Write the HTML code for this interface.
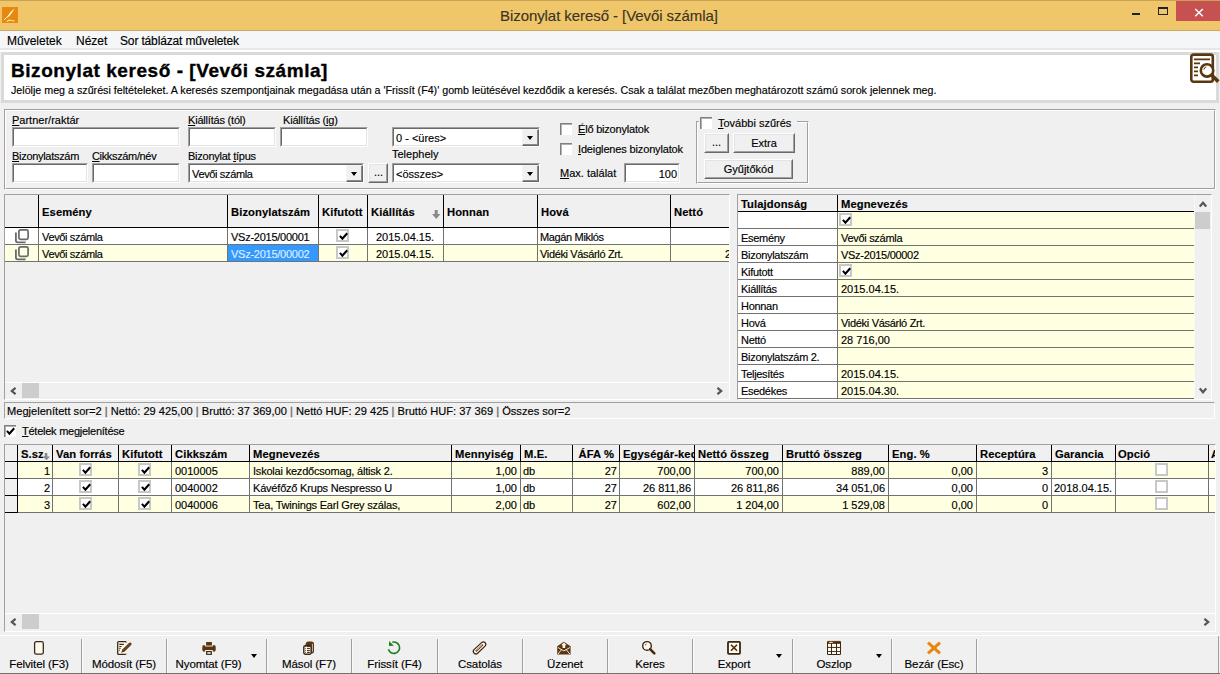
<!DOCTYPE html>
<html><head><meta charset="utf-8">
<style>
*{box-sizing:border-box;margin:0;padding:0}
html,body{width:1220px;height:674px;overflow:hidden}
body{position:relative;background:#F0F0F0;font-family:"Liberation Sans",sans-serif;font-size:11px;color:#000;letter-spacing:0}
.n{letter-spacing:0}
.a{position:absolute}
.t{position:absolute;white-space:nowrap;line-height:1;-webkit-text-stroke:0.15px currentColor}
/* title bar */
#tb{left:0;top:0;width:1220px;height:31px;background:#F0C66B;border-top:1px solid #C9A255;border-bottom:1px solid #CCA862}
#mb{left:0;top:31px;width:1220px;height:18px;background:#F5F6F7;border-bottom:1px solid #E6E7E8}
.tx{box-sizing:border-box;background:#fff;border-top:2px solid #8a8a8a;border-left:2px solid #8a8a8a;border-bottom:1px solid #fff;border-right:1px solid #fff;box-shadow:1px 1px 0 #E3E3E3 inset}
.sunk{position:absolute;background:#fff;border-top:1px solid #A0A0A0;border-left:1px solid #A0A0A0;border-right:1px solid #fff;border-bottom:1px solid #fff}
.sunk::before{content:"";position:absolute;left:0;top:0;right:0;bottom:0;border-top:1px solid #696969;border-left:1px solid #696969;border-right:1px solid #E3E3E3;border-bottom:1px solid #E3E3E3}
.btn{position:absolute;background:#F0F0F0;border-top:1px solid #fff;border-left:1px solid #fff;border-right:1px solid #696969;border-bottom:1px solid #696969;text-align:center}
.btn::before{content:"";position:absolute;left:0;top:0;right:0;bottom:0;border-top:1px solid #E3E3E3;border-left:1px solid #E3E3E3;border-right:1px solid #A0A0A0;border-bottom:1px solid #A0A0A0}
.dd{position:absolute;top:1px;right:0;width:17px;height:17px;background:#F0F0F0;border-top:1px solid #F4F4F4;border-left:1px solid #F4F4F4;border-right:1px solid #696969;border-bottom:1px solid #696969;box-shadow:inset -1px -1px 0 #8A8A8A}
.dd::after{content:"";position:absolute;left:4px;top:6px;border-left:3.5px solid transparent;border-right:3.5px solid transparent;border-top:4px solid #000}
.cb{position:absolute;width:12px;height:12px;background:#fff;border-top:1px solid #808080;border-left:1px solid #808080;box-shadow:inset 1px 1px 0 #B0B0B0}
.gcb{position:absolute;width:13px;height:13px;background:#fff;border:2px solid #C8C8C8}
.chk{position:absolute;left:1px;top:1px;width:9px;height:9px}
</style></head><body>

<!-- TITLE BAR -->
<div id="tb" class="a">
  <svg class="a" style="left:2px;top:6px" width="16" height="16" viewBox="0 0 16 16"><rect width="16" height="16" fill="#E8890F"/><path d="M2.5 12.5 L6 8.5 Q9 4 12.5 1.5 Q11 5 7.5 9 Z" fill="#FFF6D0"/><path d="M2 13 L4 11" stroke="#FFF6D0" stroke-width="1"/><path d="M5 14.5 Q7 12.5 9 13.5 L12.5 14" stroke="#FFE9B0" stroke-width="1.1" fill="none"/></svg>
  <div class="t" style="left:500px;top:7px;font-size:15px;color:#3B3423;letter-spacing:-0.07px">Bizonylat kereső - [Vevői számla]</div>
  <div class="a" style="left:1132px;top:12px;width:8px;height:2px;background:#222"></div>
  <div class="a" style="left:1158px;top:6px;width:10px;height:8px;border:1px solid #222;border-top-width:2px"></div>
  <div class="a" style="left:1176px;top:0;width:44px;height:20px;background:#C75050"></div>
  <svg class="a" style="left:1194px;top:7px" width="10" height="9" viewBox="0 0 10 9"><path d="M1.2 1 L8.8 8.2 M8.8 1 L1.2 8.2" stroke="#fff" stroke-width="1.5"/></svg>
</div>

<!-- MENU BAR -->
<div id="mb" class="a">
  <div class="t" style="left:7px;top:4px;font-size:12px">Műveletek</div>
  <div class="t" style="left:76px;top:4px;font-size:12px">Nézet</div>
  <div class="t" style="left:120px;top:4px;font-size:12px;letter-spacing:-0.15px">Sor táblázat műveletek</div>
</div>

<!-- HEADER PANEL -->
<div class="a" style="left:0;top:49px;width:1220px;height:3px;background:#fff;border-top:1px solid #E6E7E8"></div>
<div class="a" style="left:1px;top:52px;width:1218px;height:51px;background:#fff;border:3px solid #DADADA;border-top-width:3px;border-right-width:3px"></div>
<div class="t" style="left:11px;top:61px;font-size:19px;font-weight:bold;letter-spacing:0.55px;-webkit-text-stroke:0.35px #000">Bizonylat kereső - [Vevői számla]</div>
<div class="t" style="left:11px;top:85px;font-size:10.7px">Jelölje meg a szűrési feltételeket. A keresés szempontjainak megadása után a 'Frissít (F4)' gomb leütésével kezdődik a keresés. Csak a találat mezőben meghatározott számú sorok jelennek meg.</div>
<svg class="a" style="left:1189px;top:53px" width="31" height="31" viewBox="0 0 31 31">
  <rect x="2.3" y="1.6" width="21.5" height="27.2" rx="2.2" fill="#fff" stroke="#5A3710" stroke-width="2.6"/>
  <path d="M5 6.4 H21 M5 10.4 H11 M5 14.4 H9 M5 18.4 H9 M5 22.4 H9" stroke="#5A3710" stroke-width="1.7"/>
  <circle cx="18" cy="17.4" r="6.2" fill="#fff" stroke="#5A3710" stroke-width="2.6"/>
  <path d="M22.5 22 L29.3 28.6" stroke="#5A3710" stroke-width="3.6"/>
  <path d="M14.8 16.5 Q15.3 14.3 17.3 13.8" stroke="#5A3710" stroke-width="1" fill="none"/>
</svg>


<!-- FILTER PANEL -->
<div class="a" style="left:4px;top:109px;width:1212px;height:81px;border-top:1px solid #A0A0A0;border-left:1px solid #A0A0A0;border-right:1px solid #fff;border-bottom:1px solid #fff"></div>
<div class="a" style="left:5px;top:110px;width:1210px;height:79px;border-top:1px solid #fff;border-left:1px solid #fff;border-right:1px solid #A0A0A0;border-bottom:1px solid #A0A0A0"></div>

<div class="t" style="left:12px;top:114.7px"><u>P</u>artner/raktár</div>
<div class="sunk" style="left:12px;top:127px;width:168px;height:20px"></div>
<div class="t" style="left:188px;top:114.7px;letter-spacing:-0.2px"><u>K</u>iállítás (tól)</div>
<div class="sunk" style="left:188px;top:127px;width:88px;height:20px"></div>
<div class="t" style="left:283px;top:114.7px;letter-spacing:-0.2px">Kiállítás (<u>i</u>g)</div>
<div class="sunk" style="left:280px;top:127px;width:88px;height:20px"></div>
<div class="sunk" style="left:392px;top:127px;width:148px;height:20px"><div class="t" style="left:3px;top:4.7px">0 - &lt;üres&gt;</div><div class="dd"></div></div>

<div class="t" style="left:12px;top:150.7px;letter-spacing:-0.3px"><u>B</u>izonylatszám</div>
<div class="sunk" style="left:12px;top:163px;width:76px;height:20px"></div>
<div class="t" style="left:92px;top:150.7px;letter-spacing:-0.35px"><u>C</u>ikkszám/név</div>
<div class="sunk" style="left:92px;top:163px;width:88px;height:20px"></div>
<div class="t" style="left:188px;top:150.7px;letter-spacing:-0.25px">Bizonylat <u>t</u>ípus</div>
<div class="sunk" style="left:188px;top:163px;width:176px;height:20px"><div class="t" style="left:3px;top:4.7px;letter-spacing:-0.35px">Vevői számla</div><div class="dd"></div></div>
<div class="btn" style="left:368px;top:163px;width:20px;height:20px"><div class="t" style="left:5px;top:3px">...</div></div>
<div class="t" style="left:392px;top:148.7px">Telephely</div>
<div class="sunk" style="left:392px;top:163px;width:148px;height:20px"><div class="t" style="left:3px;top:4.7px">&lt;összes&gt;</div><div class="dd"></div></div>

<div class="cb" style="left:560px;top:123px"></div>
<div class="t" style="left:578px;top:124.2px;letter-spacing:-0.2px"><u>É</u>lő bizonylatok</div>
<div class="cb" style="left:560px;top:143px"></div>
<div class="t" style="left:578px;top:143.7px;letter-spacing:-0.15px"><u>I</u>deiglenes bizonylatok</div>
<div class="t" style="left:560px;top:167.5px"><u>M</u>ax. találat</div>
<div class="sunk" style="left:624px;top:163px;width:56px;height:20px"><div class="t" style="right:2px;top:4.5px">100</div></div>

<div class="a" style="left:696px;top:121px;width:113px;height:63px;border-top:1px solid #A0A0A0;border-left:1px solid #A0A0A0;border-right:1px solid #fff;border-bottom:1px solid #fff"></div>
<div class="a" style="left:697px;top:122px;width:111px;height:61px;border-top:1px solid #fff;border-left:1px solid #fff;border-right:1px solid #A0A0A0;border-bottom:1px solid #A0A0A0"></div>
<div class="a" style="left:699px;top:116px;width:98px;height:8px;background:#F0F0F0"></div>
<div class="cb" style="left:700px;top:117px"></div>
<div class="t" style="left:718px;top:118px"><u>T</u>ovábbi szűrés</div>
<div class="btn" style="left:704px;top:133px;width:25px;height:20px"><div class="t" style="left:7px;top:3px">...</div></div>
<div class="btn" style="left:733px;top:133px;width:62px;height:20px"><div class="t" style="left:0;width:60px;top:4.2px">Extra</div></div>
<div class="btn" style="left:704px;top:159px;width:89px;height:20px"><div class="t" style="left:0;width:87px;top:3.7px">Gyűjtőkód</div></div>

<!-- MAIN GRID -->
<div class="a" style="left:4px;top:194px;width:726px;height:206px;border-top:1px solid #A0A0A0;border-left:1px solid #A0A0A0;border-right:1px solid #fff;border-bottom:1px solid #fff"></div>
<div class="a" style="left:5px;top:195px;width:724px;height:32px;background:#F0F0F0;"></div>
<div class="a" style="left:5px;top:227px;width:724px;height:1px;background:#000;"></div>
<div class="a" style="left:5px;top:228px;width:724px;height:16px;background:#fff;"></div>
<div class="a" style="left:5px;top:244px;width:724px;height:1px;background:#727270;"></div>
<div class="a" style="left:5px;top:245px;width:724px;height:16px;background:#FFFFE1;"></div>
<div class="a" style="left:5px;top:261px;width:724px;height:1px;background:#727270;"></div>
<div class="a" style="left:38px;top:195px;width:1px;height:33px;background:#000;"></div>
<div class="a" style="left:38px;top:228px;width:1px;height:33px;background:#727270;"></div>
<div class="a" style="left:227px;top:195px;width:1px;height:33px;background:#000;"></div>
<div class="a" style="left:227px;top:228px;width:1px;height:33px;background:#727270;"></div>
<div class="a" style="left:318px;top:195px;width:1px;height:33px;background:#000;"></div>
<div class="a" style="left:318px;top:228px;width:1px;height:33px;background:#727270;"></div>
<div class="a" style="left:367px;top:195px;width:1px;height:33px;background:#000;"></div>
<div class="a" style="left:367px;top:228px;width:1px;height:33px;background:#727270;"></div>
<div class="a" style="left:443px;top:195px;width:1px;height:33px;background:#000;"></div>
<div class="a" style="left:443px;top:228px;width:1px;height:33px;background:#727270;"></div>
<div class="a" style="left:537px;top:195px;width:1px;height:33px;background:#000;"></div>
<div class="a" style="left:537px;top:228px;width:1px;height:33px;background:#727270;"></div>
<div class="a" style="left:670px;top:195px;width:1px;height:33px;background:#000;"></div>
<div class="a" style="left:670px;top:228px;width:1px;height:33px;background:#727270;"></div>
<div class="t" style="left:42px;top:207px;font-weight:bold;font-size:11.2px;letter-spacing:0.1px">Esemény</div>
<div class="t" style="left:231px;top:207px;font-weight:bold;font-size:11.2px;letter-spacing:0.1px">Bizonylatszám</div>
<div class="t" style="left:322px;top:207px;font-weight:bold;font-size:11.2px;letter-spacing:0.1px">Kifutott</div>
<div class="t" style="left:371px;top:207px;font-weight:bold;font-size:11.2px;letter-spacing:0.1px">Kiállítás</div>
<div class="t" style="left:447px;top:207px;font-weight:bold;font-size:11.2px;letter-spacing:0.1px">Honnan</div>
<div class="t" style="left:541px;top:207px;font-weight:bold;font-size:11.2px;letter-spacing:0.1px">Hová</div>
<div class="t" style="left:674px;top:207px;font-weight:bold;font-size:11.2px;letter-spacing:0.1px">Nettó</div>
<svg class="a" style="left:432px;top:210px" width="9" height="10" viewBox="0 0 9 10"><path d="M2.7 0 H5.7 V4 H8.5 L4.25 9 L0 4 H2.7 Z" fill="#8A8A8A"/></svg>
<svg class="a" style="left:14px;top:229px" width="16" height="15" viewBox="0 0 16 15"><path d="M1.9 3.6 V11.6 Q1.9 13.3 3.6 13.3 H11.6" stroke="#6A6A6A" stroke-width="1.8" fill="none"/><rect x="4.9" y="0.9" width="9.2" height="9.4" rx="1.6" fill="none" stroke="#6A6A6A" stroke-width="1.7"/></svg>
<div class="t" style="left:42px;top:231.7px;letter-spacing:-0.35px">Vevői számla</div>
<div class="t" style="left:231px;top:231.7px;letter-spacing:-0.25px">VSz-2015/00001</div>
<div class="gcb" style="left:336px;top:229px"><svg class="chk" viewBox="0 0 9 9"><path d="M0.9 3.9 L3.4 6.6 L8.2 1.2" stroke="#000" stroke-width="2.1" fill="none"/></svg></div>
<div class="t" style="left:376px;top:231.7px;letter-spacing:0">2015.04.15.</div>
<div class="t" style="left:540px;top:231.7px;letter-spacing:-0.35px">Magán Miklós</div>
<svg class="a" style="left:14px;top:246px" width="16" height="15" viewBox="0 0 16 15"><path d="M1.9 3.6 V11.6 Q1.9 13.3 3.6 13.3 H11.6" stroke="#6A6A6A" stroke-width="1.8" fill="none"/><rect x="4.9" y="0.9" width="9.2" height="9.4" rx="1.6" fill="none" stroke="#6A6A6A" stroke-width="1.7"/></svg>
<div class="t" style="left:42px;top:248.7px;letter-spacing:-0.35px">Vevői számla</div>
<div class="a" style="left:228px;top:245px;width:90px;height:16px;background:#3399FF;"></div>
<div class="t" style="left:231px;top:248.7px;color:#DDEEFF;letter-spacing:-0.25px">VSz-2015/00002</div>
<div class="gcb" style="left:336px;top:246px"><svg class="chk" viewBox="0 0 9 9"><path d="M0.9 3.9 L3.4 6.6 L8.2 1.2" stroke="#000" stroke-width="2.1" fill="none"/></svg></div>
<div class="t" style="left:376px;top:248.7px;letter-spacing:0">2015.04.15.</div>
<div class="t" style="left:540px;top:248.7px;letter-spacing:-0.35px">Vidéki Vásárló Zrt.</div>
<div class="a" style="left:671px;top:245px;width:58px;height:16px;overflow:hidden"><div class="t" style="left:54px;top:3.7px">2</div></div>
<div class="a" style="left:5px;top:382px;width:724px;height:1px;background:#fff;"></div>
<div class="a" style="left:5px;top:383px;width:724px;height:16px;background:#F0F0F0;"></div>
<svg class="a" style="left:10px;top:386.5px" width="7" height="8" viewBox="0 0 7 8"><path d="M5.6 0.8 L1.8 4 L5.6 7.2" stroke="#555" stroke-width="2.2" fill="none"/></svg>
<div class="a" style="left:22px;top:383px;width:17px;height:15px;background:#CDCDCD;"></div>
<svg class="a" style="left:716px;top:386.5px" width="7" height="8" viewBox="0 0 7 8"><path d="M1.4 0.8 L5.2 4 L1.4 7.2" stroke="#555" stroke-width="2.2" fill="none"/></svg>
<!-- PROPERTY GRID -->
<div class="a" style="left:737px;top:194px;width:475px;height:206px;border-top:1px solid #A0A0A0;border-left:1px solid #A0A0A0;border-right:1px solid #fff;border-bottom:1px solid #fff"></div>
<div class="a" style="left:738px;top:195px;width:456px;height:16px;background:#F0F0F0;"></div>
<div class="a" style="left:738px;top:211px;width:456px;height:1px;background:#000;"></div>
<div class="a" style="left:837px;top:195px;width:1px;height:17px;background:#000;"></div>
<div class="t" style="left:741px;top:198.5px;font-weight:bold;font-size:11.2px;letter-spacing:0.1px">Tulajdonság</div>
<div class="t" style="left:841px;top:198.5px;font-weight:bold;font-size:11.2px;letter-spacing:0.1px">Megnevezés</div>
<div class="a" style="left:738px;top:212px;width:99px;height:16px;background:#fff;"></div>
<div class="a" style="left:838px;top:212px;width:356px;height:16px;background:#FFFFE1;"></div>
<div class="a" style="left:738px;top:228px;width:456px;height:1px;background:#727270;"></div>
<div class="a" style="left:837px;top:212px;width:1px;height:17px;background:#727270;"></div>
<div class="gcb" style="left:839px;top:213px"><svg class="chk" viewBox="0 0 9 9"><path d="M0.9 3.9 L3.4 6.6 L8.2 1.2" stroke="#000" stroke-width="2.1" fill="none"/></svg></div>
<div class="a" style="left:738px;top:229px;width:99px;height:16px;background:#fff;"></div>
<div class="a" style="left:838px;top:229px;width:356px;height:16px;background:#FFFFE1;"></div>
<div class="a" style="left:738px;top:245px;width:456px;height:1px;background:#727270;"></div>
<div class="a" style="left:837px;top:229px;width:1px;height:17px;background:#727270;"></div>
<div class="t" style="left:741px;top:232.7px;letter-spacing:-0.3px">Esemény</div>
<div class="t" style="left:841px;top:232.7px;letter-spacing:-0.3px">Vevői számla</div>
<div class="a" style="left:738px;top:246px;width:99px;height:16px;background:#fff;"></div>
<div class="a" style="left:838px;top:246px;width:356px;height:16px;background:#FFFFE1;"></div>
<div class="a" style="left:738px;top:262px;width:456px;height:1px;background:#727270;"></div>
<div class="a" style="left:837px;top:246px;width:1px;height:17px;background:#727270;"></div>
<div class="t" style="left:741px;top:249.7px;letter-spacing:-0.3px">Bizonylatszám</div>
<div class="t" style="left:841px;top:249.7px;letter-spacing:-0.3px">VSz-2015/00002</div>
<div class="a" style="left:738px;top:263px;width:99px;height:16px;background:#fff;"></div>
<div class="a" style="left:838px;top:263px;width:356px;height:16px;background:#FFFFE1;"></div>
<div class="a" style="left:738px;top:279px;width:456px;height:1px;background:#727270;"></div>
<div class="a" style="left:837px;top:263px;width:1px;height:17px;background:#727270;"></div>
<div class="t" style="left:741px;top:266.7px;letter-spacing:-0.3px">Kifutott</div>
<div class="gcb" style="left:839px;top:264px"><svg class="chk" viewBox="0 0 9 9"><path d="M0.9 3.9 L3.4 6.6 L8.2 1.2" stroke="#000" stroke-width="2.1" fill="none"/></svg></div>
<div class="a" style="left:738px;top:280px;width:99px;height:16px;background:#fff;"></div>
<div class="a" style="left:838px;top:280px;width:356px;height:16px;background:#FFFFE1;"></div>
<div class="a" style="left:738px;top:296px;width:456px;height:1px;background:#727270;"></div>
<div class="a" style="left:837px;top:280px;width:1px;height:17px;background:#727270;"></div>
<div class="t" style="left:741px;top:283.7px;letter-spacing:-0.3px">Kiállítás</div>
<div class="t" style="left:841px;top:283.7px;letter-spacing:0">2015.04.15.</div>
<div class="a" style="left:738px;top:297px;width:99px;height:16px;background:#fff;"></div>
<div class="a" style="left:838px;top:297px;width:356px;height:16px;background:#FFFFE1;"></div>
<div class="a" style="left:738px;top:313px;width:456px;height:1px;background:#727270;"></div>
<div class="a" style="left:837px;top:297px;width:1px;height:17px;background:#727270;"></div>
<div class="t" style="left:741px;top:300.7px;letter-spacing:-0.3px">Honnan</div>
<div class="a" style="left:738px;top:314px;width:99px;height:16px;background:#fff;"></div>
<div class="a" style="left:838px;top:314px;width:356px;height:16px;background:#FFFFE1;"></div>
<div class="a" style="left:738px;top:330px;width:456px;height:1px;background:#727270;"></div>
<div class="a" style="left:837px;top:314px;width:1px;height:17px;background:#727270;"></div>
<div class="t" style="left:741px;top:317.7px;letter-spacing:-0.3px">Hová</div>
<div class="t" style="left:841px;top:317.7px;letter-spacing:-0.3px">Vidéki Vásárló Zrt.</div>
<div class="a" style="left:738px;top:331px;width:99px;height:16px;background:#fff;"></div>
<div class="a" style="left:838px;top:331px;width:356px;height:16px;background:#FFFFE1;"></div>
<div class="a" style="left:738px;top:347px;width:456px;height:1px;background:#727270;"></div>
<div class="a" style="left:837px;top:331px;width:1px;height:17px;background:#727270;"></div>
<div class="t" style="left:741px;top:334.7px;letter-spacing:-0.3px">Nettó</div>
<div class="t" style="left:841px;top:334.7px;letter-spacing:0">28 716,00</div>
<div class="a" style="left:738px;top:348px;width:99px;height:16px;background:#fff;"></div>
<div class="a" style="left:838px;top:348px;width:356px;height:16px;background:#FFFFE1;"></div>
<div class="a" style="left:738px;top:364px;width:456px;height:1px;background:#727270;"></div>
<div class="a" style="left:837px;top:348px;width:1px;height:17px;background:#727270;"></div>
<div class="t" style="left:741px;top:351.7px;letter-spacing:-0.3px">Bizonylatszám 2.</div>
<div class="a" style="left:738px;top:365px;width:99px;height:16px;background:#fff;"></div>
<div class="a" style="left:838px;top:365px;width:356px;height:16px;background:#FFFFE1;"></div>
<div class="a" style="left:738px;top:381px;width:456px;height:1px;background:#727270;"></div>
<div class="a" style="left:837px;top:365px;width:1px;height:17px;background:#727270;"></div>
<div class="t" style="left:741px;top:368.7px;letter-spacing:-0.3px">Teljesítés</div>
<div class="t" style="left:841px;top:368.7px;letter-spacing:0">2015.04.15.</div>
<div class="a" style="left:738px;top:382px;width:99px;height:16px;background:#fff;"></div>
<div class="a" style="left:838px;top:382px;width:356px;height:16px;background:#FFFFE1;"></div>
<div class="a" style="left:738px;top:398px;width:456px;height:1px;background:#727270;"></div>
<div class="a" style="left:837px;top:382px;width:1px;height:17px;background:#727270;"></div>
<div class="t" style="left:741px;top:385.7px;letter-spacing:-0.3px">Esedékes</div>
<div class="t" style="left:841px;top:385.7px;letter-spacing:0">2015.04.30.</div>
<div class="a" style="left:1194px;top:195px;width:17px;height:204px;background:#F0F0F0;"></div>
<div class="a" style="left:1194px;top:195px;width:1px;height:204px;background:#F8F8F8;"></div>
<svg class="a" style="left:1199px;top:201px" width="8" height="7" viewBox="0 0 8 7"><path d="M0.8 5.6 L4 1.8 L7.2 5.6" stroke="#555" stroke-width="2.2" fill="none"/></svg>
<div class="a" style="left:1195px;top:212px;width:15px;height:17px;background:#CDCDCD;"></div>
<svg class="a" style="left:1199px;top:387px" width="8" height="7" viewBox="0 0 8 7"><path d="M0.8 1.4 L4 5.2 L7.2 1.4" stroke="#555" stroke-width="2.2" fill="none"/></svg>
<!-- STATUS -->
<div class="a" style="left:4px;top:402px;width:1211px;height:17px;border-top:1px solid #A0A0A0;border-left:1px solid #A0A0A0;border-right:1px solid #fff;border-bottom:1px solid #fff"></div>
<div class="t" style="left:7px;top:405.5px;font-size:11.1px;letter-spacing:0">Megjelenített sor=2 <span style="color:#707070;-webkit-text-stroke:0.4px #707070">|</span> Nettó: 29 425,00 <span style="color:#707070;-webkit-text-stroke:0.4px #707070">|</span> Bruttó: 37 369,00 <span style="color:#707070;-webkit-text-stroke:0.4px #707070">|</span> Nettó HUF: 29 425 <span style="color:#707070;-webkit-text-stroke:0.4px #707070">|</span> Bruttó HUF: 37 369 <span style="color:#707070;-webkit-text-stroke:0.4px #707070">|</span> Összes sor=2</div>
<div class="cb" style="left:4px;top:425px"><svg class="chk" viewBox="0 0 9 9"><path d="M0.9 3.9 L3.4 6.6 L8.2 1.2" stroke="#000" stroke-width="2.1" fill="none"/></svg></div>
<div class="t" style="left:22px;top:425.6px;letter-spacing:-0.25px"><u>T</u>ételek megjelenítése</div>
<!-- BOTTOM GRID -->
<div class="a" style="left:4px;top:444px;width:1212px;height:188px;border-top:1px solid #A0A0A0;border-left:1px solid #A0A0A0;border-right:1px solid #fff;border-bottom:1px solid #fff"></div>
<div class="a" style="left:5px;top:445px;width:1210px;height:16px;background:#F0F0F0;"></div>
<div class="a" style="left:5px;top:461px;width:1210px;height:1px;background:#000;"></div>
<div class="a" style="left:18px;top:462px;width:1197px;height:16px;background:#FFFFE1;"></div>
<div class="a" style="left:18px;top:478px;width:1197px;height:1px;background:#727270;"></div>
<div class="a" style="left:5px;top:478px;width:13px;height:1px;background:#000;"></div>
<div class="a" style="left:18px;top:479px;width:1197px;height:16px;background:#fff;"></div>
<div class="a" style="left:18px;top:495px;width:1197px;height:1px;background:#727270;"></div>
<div class="a" style="left:5px;top:495px;width:13px;height:1px;background:#000;"></div>
<div class="a" style="left:18px;top:496px;width:1197px;height:16px;background:#FFFFE1;"></div>
<div class="a" style="left:18px;top:512px;width:1197px;height:1px;background:#727270;"></div>
<div class="a" style="left:5px;top:512px;width:13px;height:1px;background:#000;"></div>
<div class="a" style="left:17px;top:445px;width:1px;height:17px;background:#000;"></div>
<div class="a" style="left:17px;top:462px;width:1px;height:51px;background:#000;"></div>
<div class="a" style="left:52px;top:445px;width:1px;height:17px;background:#000;"></div>
<div class="a" style="left:52px;top:462px;width:1px;height:51px;background:#727270;"></div>
<div class="a" style="left:118px;top:445px;width:1px;height:17px;background:#000;"></div>
<div class="a" style="left:118px;top:462px;width:1px;height:51px;background:#727270;"></div>
<div class="a" style="left:171px;top:445px;width:1px;height:17px;background:#000;"></div>
<div class="a" style="left:171px;top:462px;width:1px;height:51px;background:#727270;"></div>
<div class="a" style="left:249px;top:445px;width:1px;height:17px;background:#000;"></div>
<div class="a" style="left:249px;top:462px;width:1px;height:51px;background:#727270;"></div>
<div class="a" style="left:451px;top:445px;width:1px;height:17px;background:#000;"></div>
<div class="a" style="left:451px;top:462px;width:1px;height:51px;background:#727270;"></div>
<div class="a" style="left:520px;top:445px;width:1px;height:17px;background:#000;"></div>
<div class="a" style="left:520px;top:462px;width:1px;height:51px;background:#727270;"></div>
<div class="a" style="left:572px;top:445px;width:1px;height:17px;background:#000;"></div>
<div class="a" style="left:572px;top:462px;width:1px;height:51px;background:#727270;"></div>
<div class="a" style="left:619px;top:445px;width:1px;height:17px;background:#000;"></div>
<div class="a" style="left:619px;top:462px;width:1px;height:51px;background:#727270;"></div>
<div class="a" style="left:694px;top:445px;width:1px;height:17px;background:#000;"></div>
<div class="a" style="left:694px;top:462px;width:1px;height:51px;background:#727270;"></div>
<div class="a" style="left:782px;top:445px;width:1px;height:17px;background:#000;"></div>
<div class="a" style="left:782px;top:462px;width:1px;height:51px;background:#727270;"></div>
<div class="a" style="left:888px;top:445px;width:1px;height:17px;background:#000;"></div>
<div class="a" style="left:888px;top:462px;width:1px;height:51px;background:#727270;"></div>
<div class="a" style="left:976px;top:445px;width:1px;height:17px;background:#000;"></div>
<div class="a" style="left:976px;top:462px;width:1px;height:51px;background:#727270;"></div>
<div class="a" style="left:1051px;top:445px;width:1px;height:17px;background:#000;"></div>
<div class="a" style="left:1051px;top:462px;width:1px;height:51px;background:#727270;"></div>
<div class="a" style="left:1115px;top:445px;width:1px;height:17px;background:#000;"></div>
<div class="a" style="left:1115px;top:462px;width:1px;height:51px;background:#727270;"></div>
<div class="a" style="left:1208px;top:445px;width:1px;height:17px;background:#000;"></div>
<div class="a" style="left:1208px;top:462px;width:1px;height:51px;background:#727270;"></div>
<div class="a" style="left:18px;top:445px;width:34px;height:16px;overflow:hidden"><div class="t" style="left:3px;top:4px;font-weight:bold;font-size:11.2px;letter-spacing:0.1px">S.sz.</div></div>
<div class="a" style="left:53px;top:445px;width:65px;height:16px;overflow:hidden"><div class="t" style="left:3px;top:4px;font-weight:bold;font-size:11.2px;letter-spacing:0.1px">Van forrás</div></div>
<div class="a" style="left:119px;top:445px;width:52px;height:16px;overflow:hidden"><div class="t" style="left:3px;top:4px;font-weight:bold;font-size:11.2px;letter-spacing:0.1px">Kifutott</div></div>
<div class="a" style="left:172px;top:445px;width:77px;height:16px;overflow:hidden"><div class="t" style="left:3px;top:4px;font-weight:bold;font-size:11.2px;letter-spacing:0.1px">Cikkszám</div></div>
<div class="a" style="left:250px;top:445px;width:201px;height:16px;overflow:hidden"><div class="t" style="left:3px;top:4px;font-weight:bold;font-size:11.2px;letter-spacing:0.1px">Megnevezés</div></div>
<div class="a" style="left:452px;top:445px;width:68px;height:16px;overflow:hidden"><div class="t" style="left:3px;top:4px;font-weight:bold;font-size:11.2px;letter-spacing:0.1px">Mennyiség</div></div>
<div class="a" style="left:521px;top:445px;width:51px;height:16px;overflow:hidden"><div class="t" style="left:3px;top:4px;font-weight:bold;font-size:11.2px;letter-spacing:0.1px">M.E.</div></div>
<div class="a" style="left:573px;top:445px;width:46px;height:16px;overflow:hidden"><div class="t" style="right:5px;top:4px;font-weight:bold;font-size:11.2px;letter-spacing:0.1px">ÁFA %</div></div>
<div class="a" style="left:620px;top:445px;width:74px;height:16px;overflow:hidden"><div class="t" style="left:3px;top:4px;font-weight:bold;font-size:11.2px;letter-spacing:0.1px">Egységár-kedv</div></div>
<div class="a" style="left:695px;top:445px;width:87px;height:16px;overflow:hidden"><div class="t" style="left:3px;top:4px;font-weight:bold;font-size:11.2px;letter-spacing:0.1px">Nettó összeg</div></div>
<div class="a" style="left:783px;top:445px;width:105px;height:16px;overflow:hidden"><div class="t" style="left:3px;top:4px;font-weight:bold;font-size:11.2px;letter-spacing:0.1px">Bruttó összeg</div></div>
<div class="a" style="left:889px;top:445px;width:87px;height:16px;overflow:hidden"><div class="t" style="left:3px;top:4px;font-weight:bold;font-size:11.2px;letter-spacing:0.1px">Eng. %</div></div>
<div class="a" style="left:977px;top:445px;width:74px;height:16px;overflow:hidden"><div class="t" style="left:3px;top:4px;font-weight:bold;font-size:11.2px;letter-spacing:0.1px">Receptúra</div></div>
<div class="a" style="left:1052px;top:445px;width:63px;height:16px;overflow:hidden"><div class="t" style="left:3px;top:4px;font-weight:bold;font-size:11.2px;letter-spacing:0.1px">Garancia</div></div>
<div class="a" style="left:1116px;top:445px;width:92px;height:16px;overflow:hidden"><div class="t" style="left:2px;top:4px;font-weight:bold;font-size:11.2px;letter-spacing:0.1px">Opció</div></div>
<div class="a" style="left:1209px;top:445px;width:6px;height:16px;overflow:hidden"><div class="t" style="left:2px;top:4px;font-weight:bold;font-size:11.2px;letter-spacing:0.1px">A</div></div>
<svg class="a" style="left:43px;top:453px" width="8" height="8" viewBox="0 0 8 8"><path d="M1.8 0 H4.3 V3.5 H7 L3.5 7.3 L0 3.5 H1.8 Z" fill="#8A8A8A"/></svg>
<div class="t" style="right:1170px;top:465.7px;letter-spacing:0">1</div>
<div class="gcb" style="left:79px;top:463px"><svg class="chk" viewBox="0 0 9 9"><path d="M0.9 3.9 L3.4 6.6 L8.2 1.2" stroke="#000" stroke-width="2.1" fill="none"/></svg></div>
<div class="gcb" style="left:138px;top:463px"><svg class="chk" viewBox="0 0 9 9"><path d="M0.9 3.9 L3.4 6.6 L8.2 1.2" stroke="#000" stroke-width="2.1" fill="none"/></svg></div>
<div class="t" style="left:175px;top:465.7px;letter-spacing:0">0010005</div>
<div class="t" style="left:253px;top:465.7px;letter-spacing:-0.2px">Iskolai kezdőcsomag, áltisk 2.</div>
<div class="t" style="right:703px;top:465.7px;letter-spacing:0">1,00</div>
<div class="t" style="left:523px;top:465.7px;">db</div>
<div class="t" style="right:603px;top:465.7px;letter-spacing:0">27</div>
<div class="t" style="right:529px;top:465.7px;letter-spacing:0">700,00</div>
<div class="t" style="right:441px;top:465.7px;letter-spacing:0">700,00</div>
<div class="t" style="right:335px;top:465.7px;letter-spacing:0">889,00</div>
<div class="t" style="right:247px;top:465.7px;letter-spacing:0">0,00</div>
<div class="t" style="right:172px;top:465.7px;letter-spacing:0">3</div>
<div class="gcb" style="left:1155px;top:463px"></div>
<div class="t" style="right:1170px;top:482.7px;letter-spacing:0">2</div>
<div class="gcb" style="left:79px;top:480px"><svg class="chk" viewBox="0 0 9 9"><path d="M0.9 3.9 L3.4 6.6 L8.2 1.2" stroke="#000" stroke-width="2.1" fill="none"/></svg></div>
<div class="gcb" style="left:138px;top:480px"><svg class="chk" viewBox="0 0 9 9"><path d="M0.9 3.9 L3.4 6.6 L8.2 1.2" stroke="#000" stroke-width="2.1" fill="none"/></svg></div>
<div class="t" style="left:175px;top:482.7px;letter-spacing:0">0040002</div>
<div class="t" style="left:253px;top:482.7px;letter-spacing:-0.2px">Kávéfőző Krups Nespresso U</div>
<div class="t" style="right:703px;top:482.7px;letter-spacing:0">1,00</div>
<div class="t" style="left:523px;top:482.7px;">db</div>
<div class="t" style="right:603px;top:482.7px;letter-spacing:0">27</div>
<div class="t" style="right:529px;top:482.7px;letter-spacing:0">26 811,86</div>
<div class="t" style="right:441px;top:482.7px;letter-spacing:0">26 811,86</div>
<div class="t" style="right:335px;top:482.7px;letter-spacing:0">34 051,06</div>
<div class="t" style="right:247px;top:482.7px;letter-spacing:0">0,00</div>
<div class="t" style="right:172px;top:482.7px;letter-spacing:0">0</div>
<div class="t" style="left:1054px;top:482.7px;letter-spacing:0">2018.04.15.</div>
<div class="gcb" style="left:1155px;top:480px"></div>
<div class="t" style="right:1170px;top:499.7px;letter-spacing:0">3</div>
<div class="gcb" style="left:79px;top:497px"><svg class="chk" viewBox="0 0 9 9"><path d="M0.9 3.9 L3.4 6.6 L8.2 1.2" stroke="#000" stroke-width="2.1" fill="none"/></svg></div>
<div class="gcb" style="left:138px;top:497px"><svg class="chk" viewBox="0 0 9 9"><path d="M0.9 3.9 L3.4 6.6 L8.2 1.2" stroke="#000" stroke-width="2.1" fill="none"/></svg></div>
<div class="t" style="left:175px;top:499.7px;letter-spacing:0">0040006</div>
<div class="t" style="left:253px;top:499.7px;letter-spacing:-0.2px">Tea, Twinings Earl Grey szálas,</div>
<div class="t" style="right:703px;top:499.7px;letter-spacing:0">2,00</div>
<div class="t" style="left:523px;top:499.7px;">db</div>
<div class="t" style="right:603px;top:499.7px;letter-spacing:0">27</div>
<div class="t" style="right:529px;top:499.7px;letter-spacing:0">602,00</div>
<div class="t" style="right:441px;top:499.7px;letter-spacing:0">1 204,00</div>
<div class="t" style="right:335px;top:499.7px;letter-spacing:0">1 529,08</div>
<div class="t" style="right:247px;top:499.7px;letter-spacing:0">0,00</div>
<div class="t" style="right:172px;top:499.7px;letter-spacing:0">0</div>
<div class="gcb" style="left:1155px;top:497px"></div>
<div class="a" style="left:5px;top:613px;width:1210px;height:1px;background:#fff;"></div>
<svg class="a" style="left:10px;top:617.5px" width="7" height="8" viewBox="0 0 7 8"><path d="M5.6 0.8 L1.8 4 L5.6 7.2" stroke="#555" stroke-width="2.2" fill="none"/></svg>
<div class="a" style="left:22px;top:614px;width:17px;height:15px;background:#CDCDCD;"></div>
<svg class="a" style="left:1203px;top:617.5px" width="7" height="8" viewBox="0 0 7 8"><path d="M1.4 0.8 L5.2 4 L1.4 7.2" stroke="#555" stroke-width="2.2" fill="none"/></svg>
<!-- TOOLBAR -->
<div class="a" style="left:0px;top:635px;width:1220px;height:1px;background:#fff;"></div>
<div class="a" style="left:0px;top:673px;width:1220px;height:1px;background:#727270;"></div>
<div class="a" style="left:81px;top:639px;width:1px;height:34px;background:#A0A0A0;"></div>
<div class="a" style="left:82px;top:639px;width:1px;height:34px;background:#FAFAFA;"></div>
<div class="a" style="left:166px;top:639px;width:1px;height:34px;background:#A0A0A0;"></div>
<div class="a" style="left:167px;top:639px;width:1px;height:34px;background:#FAFAFA;"></div>
<div class="a" style="left:266px;top:639px;width:1px;height:34px;background:#A0A0A0;"></div>
<div class="a" style="left:267px;top:639px;width:1px;height:34px;background:#FAFAFA;"></div>
<div class="a" style="left:351px;top:639px;width:1px;height:34px;background:#A0A0A0;"></div>
<div class="a" style="left:352px;top:639px;width:1px;height:34px;background:#FAFAFA;"></div>
<div class="a" style="left:437px;top:639px;width:1px;height:34px;background:#A0A0A0;"></div>
<div class="a" style="left:438px;top:639px;width:1px;height:34px;background:#FAFAFA;"></div>
<div class="a" style="left:522px;top:639px;width:1px;height:34px;background:#A0A0A0;"></div>
<div class="a" style="left:523px;top:639px;width:1px;height:34px;background:#FAFAFA;"></div>
<div class="a" style="left:607px;top:639px;width:1px;height:34px;background:#A0A0A0;"></div>
<div class="a" style="left:608px;top:639px;width:1px;height:34px;background:#FAFAFA;"></div>
<div class="a" style="left:692px;top:639px;width:1px;height:34px;background:#A0A0A0;"></div>
<div class="a" style="left:693px;top:639px;width:1px;height:34px;background:#FAFAFA;"></div>
<div class="a" style="left:792px;top:639px;width:1px;height:34px;background:#A0A0A0;"></div>
<div class="a" style="left:793px;top:639px;width:1px;height:34px;background:#FAFAFA;"></div>
<div class="a" style="left:891px;top:639px;width:1px;height:34px;background:#A0A0A0;"></div>
<div class="a" style="left:892px;top:639px;width:1px;height:34px;background:#FAFAFA;"></div>
<div class="a" style="left:976px;top:639px;width:1px;height:34px;background:#A0A0A0;"></div>
<div class="a" style="left:977px;top:639px;width:1px;height:34px;background:#FAFAFA;"></div>
<div class="a" style="left:1218px;top:636px;width:1px;height:37px;background:#A0A0A0;"></div>
<div class="t" style="left:-21px;width:120px;text-align:center;top:658.5px;font-size:11.5px;letter-spacing:-0.1px">Felvitel (F3)</div>
<div class="t" style="left:64px;width:120px;text-align:center;top:658.5px;font-size:11.5px;letter-spacing:-0.1px">Módosít (F5)</div>
<div class="t" style="left:148.5px;width:120px;text-align:center;top:658.5px;font-size:11.5px;letter-spacing:-0.1px">Nyomtat (F9)</div>
<div class="t" style="left:249px;width:120px;text-align:center;top:658.5px;font-size:11.5px;letter-spacing:-0.1px">Másol (F7)</div>
<div class="t" style="left:334.5px;width:120px;text-align:center;top:658.5px;font-size:11.5px;letter-spacing:-0.1px">Frissít (F4)</div>
<div class="t" style="left:420px;width:120px;text-align:center;top:658.5px;font-size:11.5px;letter-spacing:-0.1px">Csatolás</div>
<div class="t" style="left:505px;width:120px;text-align:center;top:658.5px;font-size:11.5px;letter-spacing:-0.1px">Üzenet</div>
<div class="t" style="left:590px;width:120px;text-align:center;top:658.5px;font-size:11.5px;letter-spacing:-0.1px">Keres</div>
<div class="t" style="left:674px;width:120px;text-align:center;top:658.5px;font-size:11.5px;letter-spacing:-0.1px">Export</div>
<div class="t" style="left:774px;width:120px;text-align:center;top:658.5px;font-size:11.5px;letter-spacing:-0.1px">Oszlop</div>
<div class="t" style="left:874px;width:120px;text-align:center;top:658.5px;font-size:11.5px;letter-spacing:-0.1px">Bezár (Esc)</div>
<div class="a" style="left:251px;top:654px;width:0;height:0;border-left:3.5px solid transparent;border-right:3.5px solid transparent;border-top:4px solid #000"></div>
<div class="a" style="left:776px;top:654px;width:0;height:0;border-left:3.5px solid transparent;border-right:3.5px solid transparent;border-top:4px solid #000"></div>
<div class="a" style="left:876px;top:654px;width:0;height:0;border-left:3.5px solid transparent;border-right:3.5px solid transparent;border-top:4px solid #000"></div>
<svg class="a" style="left:26px;top:638px" width="28" height="20" viewBox="0 0 28 20"><rect x="8.6" y="3.6" width="8.7" height="12.6" rx="1.8" fill="#FFFBEF" stroke="#3A2612" stroke-width="1.3"/></svg>
<svg class="a" style="left:110px;top:638px" width="28" height="20" viewBox="0 0 28 20"><path d="M16 4.5 V4.2 Q16 3.6 15.3 3.6 H8.7 Q7.7 3.6 7.7 4.6 V15.4 Q7.7 16.4 8.7 16.4 H15.6" fill="#FFFBEF" stroke="#3A2612" stroke-width="1.3"/><path d="M9.3 6.4 H13.8 M9.3 8.5 H11.5 M9.3 10.4 H10.5 M9.3 12.4 H10" stroke="#3A2612" stroke-width="1.1"/><path d="M11.2 14.8 L12.3 11.6 L19 4.9 Q20.2 3.9 21.2 4.9 Q22.1 6 21.1 7.1 L14.4 13.8 Z" fill="#5A3410"/><path d="M13.3 12.4 L19.6 6.1 M12.6 13.4 L20.3 5.6" stroke="#B88850" stroke-width="0.5" stroke-dasharray="0.8 0.8"/><circle cx="16" cy="16" r="0.6" fill="#3A2612"/></svg>
<svg class="a" style="left:196px;top:638px" width="28" height="20" viewBox="0 0 28 20"><rect x="10.1" y="4" width="5.8" height="3.6" fill="#5C3510"/><path d="M6.3 9 Q6.3 7 8.2 7 Q9.2 7 9.3 8.6 H16.6 Q16.7 7 17.8 7 Q19.7 7 19.7 9 V11.8 Q19.7 13.8 17.8 13.8 Q16.7 13.8 16.6 12 H9.3 Q9.2 13.8 8.2 13.8 Q6.3 13.8 6.3 11.8 Z" fill="#5C3510"/><rect x="10.7" y="13.6" width="4.6" height="2.7" fill="#fff" stroke="#3A2612" stroke-width="1.2"/></svg>
<svg class="a" style="left:296px;top:638px" width="28" height="20" viewBox="0 0 28 20"><path d="M9.5 7 Q9.5 4 12.5 3.6 H15.5 Q18 3.6 18 6.3 V13.5 Q18 15.4 16 15.4 H14 V7 Z" fill="#5A3410"/><path d="M16.4 5.8 V13.8" stroke="#FFFBEF" stroke-width="0.7"/><rect x="7.8" y="7.7" width="7.3" height="8.5" rx="1.4" fill="#FFFBEF" stroke="#3A2612" stroke-width="1.4"/><path d="M9.2 8.6 H9.9 M9.2 10.6 H9.9 M9.2 12.6 H9.9 M9.2 14.4 H9.9" stroke="#3A2612" stroke-width="1"/><path d="M11 8.6 H13.8 M11 10.6 H13.8 M11 12.6 H13.8 M11 14.4 H13.8" stroke="#3A2612" stroke-width="1"/></svg>
<svg class="a" style="left:381px;top:638px" width="28" height="20" viewBox="0 0 28 20"><path d="M11.3 4.2 A5.7 5.7 0 1 1 7.4 11.3" fill="none" stroke="#1F7F22" stroke-width="1.6"/><path d="M8 3 L8 7.9 L12.9 7.7 Z" fill="#138A15"/></svg>
<svg class="a" style="left:466px;top:638px" width="28" height="20" viewBox="0 0 28 20"><path d="M8.2 15.2 Q6.3 13.4 8 11.6 L15.6 4.6 Q17.4 3.1 19.1 4.7 Q20.6 6.4 19 8.1 L11.6 15.2 Q9.9 16.8 8.2 15.2 Z" fill="#FFFBEF" stroke="#3A2612" stroke-width="1.2"/><path d="M9.8 13.3 L16.8 6.6" stroke="#6A3C10" stroke-width="1.8"/><path d="M10.5 12.4 L16.2 7" stroke="#FFFBEF" stroke-width="0.6"/></svg>
<svg class="a" style="left:551px;top:638px" width="28" height="20" viewBox="0 0 28 20"><path d="M6.2 8.2 L12.8 3.8 L19.6 8.2 V16.6 H6.2 Z" fill="#5C3510"/><path d="M11.6 10 V7.2 H10.2 L12.9 4.6 L15.6 7.2 H14.2 V10 Z" fill="#FFFBEF"/><path d="M7 9.5 L12.9 12.9 L19 9.5 M7 16 L10.5 11.6 M18.8 16 L15.2 11.6" fill="none" stroke="#FFFBEF" stroke-width="0.9"/></svg>
<svg class="a" style="left:636px;top:638px" width="28" height="20" viewBox="0 0 28 20"><circle cx="11" cy="7.9" r="4.3" fill="#FFFBEF" stroke="#3A2612" stroke-width="1.4"/><path d="M14.1 11.1 L18.3 15.4" stroke="#4A2A0E" stroke-width="2.6" stroke-linecap="round"/><path d="M9.1 7.2 L10.4 6" stroke="#3A2612" stroke-width="1"/></svg>
<svg class="a" style="left:720px;top:638px" width="28" height="20" viewBox="0 0 28 20"><rect x="8" y="3.9" width="12" height="12" rx="0.8" fill="#FFFBEF" stroke="#3A2612" stroke-width="1.8"/><path d="M11 6.7 L17 12.7 M17 6.7 L11 12.7" stroke="#4A2A0E" stroke-width="1.6"/></svg>
<svg class="a" style="left:820px;top:638px" width="28" height="20" viewBox="0 0 28 20"><rect x="7" y="3" width="14" height="14" rx="1.2" fill="#3A2612"/><path d="M8 3.6 H20" stroke="#6A3C10" stroke-width="1.4"/><ellipse cx="11" cy="4.3" rx="2.3" ry="0.6" fill="#F8E0B8"/><rect x="8" y="5.8" width="3" height="3.1" fill="#FFFBEF"/><rect x="12" y="5.8" width="4" height="3.1" fill="#FFFBEF"/><rect x="17" y="5.8" width="3" height="3.1" fill="#FFFBEF"/><rect x="8" y="9.9" width="3" height="3.1" fill="#FFFBEF"/><rect x="12" y="9.9" width="4" height="3.1" fill="#FFFBEF"/><rect x="17" y="9.9" width="3" height="3.1" fill="#FFFBEF"/><rect x="8" y="13.9" width="3" height="2.1" fill="#FFFBEF"/><rect x="12" y="13.9" width="4" height="2.1" fill="#FFFBEF"/><rect x="17" y="13.9" width="3" height="2.1" fill="#FFFBEF"/></svg>
<svg class="a" style="left:920px;top:638px" width="28" height="20" viewBox="0 0 28 20"><path d="M8 4.6 L20 15.4 M20 4.6 L8 15.4" stroke="#E8870F" stroke-width="3.1"/></svg>
</body></html>
